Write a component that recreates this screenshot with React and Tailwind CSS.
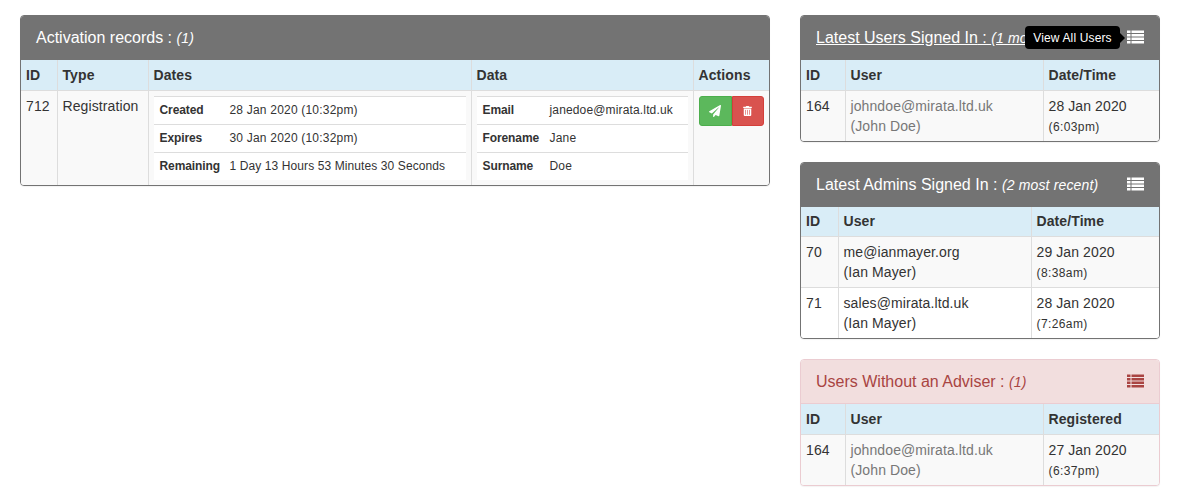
import React from "react";
import { FaPaperPlane, FaTrashAlt } from "react-icons/fa";

const th = "h-[30px] border-r border-b border-[#ddd] last:border-r-0 bg-[#d9edf7] px-[5px] text-left align-middle font-bold text-[#333] tracking-[0.1px]";
const td = "border-r border-[#ddd] last:border-r-0 p-[5px] align-top text-[#333] tracking-[0.1px]";

function Panel({ heading, headClass, borderClass, headH, children }) {
  return (
    <div className={`overflow-hidden rounded-[4px] border bg-white shadow-[0_1px_1px_rgba(0,0,0,0.05)] ${borderClass}`}>
      <div className={`flex items-center justify-between pl-[15px] pr-[15px] text-[16px] ${headH} ${headClass}`}>
        {heading}
      </div>
      {children}
    </div>
  );
}

function Title({ title, note, underline }) {
  return (
    <div className={`whitespace-nowrap ${underline ? "underline" : ""}`}>
      {title} : <em className="text-[14px] tracking-[0.15px]">{note}</em>
    </div>
  );
}

function SideTable({ w1, w3, last, rows, muted }) {
  return (
    <table className="w-full table-fixed border-collapse text-[14px] leading-[20px]">
      <thead>
        <tr>
          <th className={`${th} ${w1}`}>ID</th>
          <th className={th}>User</th>
          <th className={`${th} ${w3}`}>{last}</th>
        </tr>
      </thead>
      <tbody>
        {rows.map((r, i) => (
          <tr key={i} className={i % 2 === 0 ? "bg-[#f9f9f9]" : "bg-white"}>
            <td className={`${td} ${i > 0 ? "border-t" : ""}`}>{r[0]}</td>
            <td className={`${td} ${i > 0 ? "border-t" : ""} ${muted ? "text-[#777]" : ""}`}>
              {r[1]}<br />{r[2]}
            </td>
            <td className={`${td} ${i > 0 ? "border-t" : ""}`}>
              {r[3]}<br /><span className="text-[12px] leading-none tracking-[0.4px]">{r[4]}</span>
            </td>
          </tr>
        ))}
      </tbody>
    </table>
  );
}

function Inner({ rows, w }) {
  return (
    <table className="w-full table-fixed border-collapse bg-white text-[12px] leading-[17px]">
      <tbody>
        {rows.map(([k, v, t]) => (
          <tr key={k} className="h-[28px]">
            <td className={`border-t border-[#ddd] pl-[6px] pr-[4px] font-bold tracking-[-0.1px] ${w}`}>{k}</td>
            <td className={`whitespace-nowrap border-t border-[#ddd] pl-[5px] ${t || "tracking-[0.2px]"}`}>{v}</td>
          </tr>
        ))}
      </tbody>
    </table>
  );
}

const ListIcon = () => (
  <svg viewBox="0 0 17 14" className="mb-[2px] h-[14px] w-[17px] shrink-0" fill="currentColor">
    <rect x="0" y="0.5" width="3.5" height="2.5" />
    <rect x="4.5" y="0.5" width="12.5" height="2.5" />
    <rect x="0" y="4" width="3.5" height="2.5" />
    <rect x="4.5" y="4" width="12.5" height="2.5" />
    <rect x="0" y="7.5" width="3.5" height="2.5" />
    <rect x="4.5" y="7.5" width="12.5" height="2.5" />
    <rect x="0" y="11" width="3.5" height="2.5" />
    <rect x="4.5" y="11" width="12.5" height="2.5" />
  </svg>
);

export default function App() {
  return (
    <div className="flex h-[498px] items-start gap-[30px] overflow-hidden bg-white pl-[20px] pt-[15px] text-[14px] text-[#333] [font-family:'Liberation_Sans',Arial,sans-serif]">
      <div className="w-[750px] shrink-0">
        <Panel
          headH="h-[44px]"
          borderClass="border-[#737373]"
          headClass="bg-[#737373] text-white"
          heading={<Title title="Activation records" note="(1)" />}
        >
          <table className="w-full table-fixed border-collapse text-[14px] leading-[20px]">
            <thead>
              <tr>
                <th className={`${th} w-[36px]`}>ID</th>
                <th className={`${th} w-[91px]`}>Type</th>
                <th className={`${th} w-[323px]`}>Dates</th>
                <th className={`${th} w-[222px]`}>Data</th>
                <th className={th}>Actions</th>
              </tr>
            </thead>
            <tbody>
              <tr className="bg-[#f9f9f9]">
                <td className={td}>712</td>
                <td className={td}>Registration</td>
                <td className={td}>
                  <Inner
                    w="w-[71px]"
                    rows={[
                      ["Created", "28 Jan 2020 (10:32pm)"],
                      ["Expires", "30 Jan 2020 (10:32pm)"],
                      ["Remaining", "1 Day 13 Hours 53 Minutes 30 Seconds", "tracking-[0.1px]"],
                    ]}
                  />
                </td>
                <td className={td}>
                  <Inner
                    w="w-[68px]"
                    rows={[
                      ["Email", "janedoe@mirata.ltd.uk", "tracking-[0.15px]"],
                      ["Forename", "Jane"],
                      ["Surname", "Doe"],
                    ]}
                  />
                </td>
                <td className={td}>
                  <div className="flex h-[30px] w-[65px]">
                    <div className="flex w-[33px] items-center justify-center rounded-l-[3px] border border-[#4cae4c] bg-[#5cb85c] text-white">
                      <FaPaperPlane className="h-[12px] w-[12px]" />
                    </div>
                    <div className="flex w-[32px] items-center justify-center rounded-r-[3px] border border-[#d43f3a] bg-[#d9534f] text-white">
                      <FaTrashAlt className="h-[10px] w-[9px]" />
                    </div>
                  </div>
                </td>
              </tr>
            </tbody>
          </table>
        </Panel>
      </div>
      <div className="flex w-[360px] shrink-0 flex-col gap-[20px]">
        <Panel
          headH="h-[44px]"
          borderClass="border-[#737373]"
          headClass="relative bg-[#737373] text-white"
          heading={
            <>
              <Title title="Latest Users Signed In" note="(1 most recent)" underline />
              <ListIcon />
              <div className="absolute left-[224px] top-[10px] flex h-[23px] w-[95px] items-center justify-center rounded-[4px] bg-black text-[12px] tracking-[0.15px] text-white">
                View All Users
                <span className="absolute left-full top-[7px] border-y-[5px] border-l-[5px] border-y-transparent border-l-black" />
              </div>
            </>
          }
        >
          <SideTable
            w1="w-[44px]" w3="w-[116px]" last="Date/Time" muted
            rows={[["164", "johndoe@mirata.ltd.uk", "(John Doe)", "28 Jan 2020", "(6:03pm)"]]}
          />
        </Panel>
        <Panel
          headH="h-[44px]"
          borderClass="border-[#737373]"
          headClass="bg-[#737373] text-white"
          heading={
            <>
              <Title title="Latest Admins Signed In" note="(2 most recent)" />
              <ListIcon />
            </>
          }
        >
          <SideTable
            w1="w-[37px]" w3="w-[128px]" last="Date/Time"
            rows={[
              ["70", "me@ianmayer.org", "(Ian Mayer)", "29 Jan 2020", "(8:38am)"],
              ["71", "sales@mirata.ltd.uk", "(Ian Mayer)", "28 Jan 2020", "(7:26am)"],
            ]}
          />
        </Panel>
        <Panel
          headH="h-[44px] border-b border-[#ebccd1]"
          borderClass="border-[#ebccd1]"
          headClass="bg-[#f2dede] text-[#a94442]"
          heading={
            <>
              <Title title="Users Without an Adviser" note="(1)" />
              <ListIcon />
            </>
          }
        >
          <SideTable
            w1="w-[44px]" w3="w-[116px]" last="Registered" muted
            rows={[["164", "johndoe@mirata.ltd.uk", "(John Doe)", "27 Jan 2020", "(6:37pm)"]]}
          />
        </Panel>
      </div>
    </div>
  );
}
